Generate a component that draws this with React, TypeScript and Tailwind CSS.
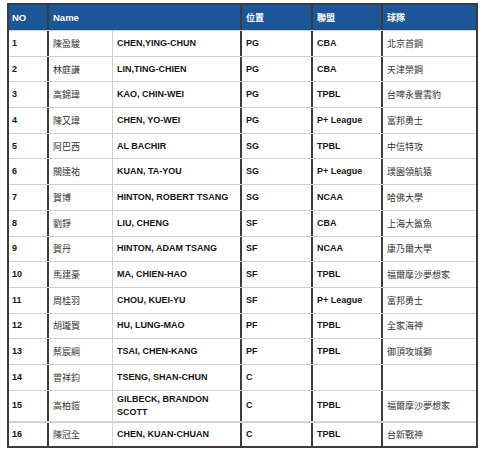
const players = [
  { no: 1, zh: '陳盈駿', en: 'CHEN,YING-CHUN', pos: 'PG', league: 'CBA', team: '北京首鋼' },
  { no: 2, zh: '林庭謙', en: 'LIN,TING-CHIEN', pos: 'PG', league: 'CBA', team: '天津榮鋼' },
  { no: 3, zh: '高錦瑋', en: 'KAO, CHIN-WEI', pos: 'PG', league: 'TPBL', team: '台啤永豐雲豹' },
  { no: 4, zh: '陳又瑋', en: 'CHEN, YO-WEI', pos: 'PG', league: 'P+ League', team: '富邦勇士' },
  { no: 5, zh: '阿巴西', en: 'AL BACHIR', pos: 'SG', league: 'TPBL', team: '中信特攻' },
  { no: 6, zh: '關達祐', en: 'KUAN, TA-YOU', pos: 'SG', league: 'P+ League', team: '璞園領航猿' },
  { no: 7, zh: '賀博', en: 'HINTON, ROBERT TSANG', pos: 'SG', league: 'NCAA', team: '哈佛大學' },
  { no: 8, zh: '劉錚', en: 'LIU, CHENG', pos: 'SF', league: 'CBA', team: '上海大鯊魚' },
  { no: 9, zh: '賀丹', en: 'HINTON, ADAM TSANG', pos: 'SF', league: 'NCAA', team: '康乃爾大學' },
  { no: 10, zh: '馬建豪', en: 'MA, CHIEN-HAO', pos: 'SF', league: 'TPBL', team: '福爾摩沙夢想家' },
  { no: 11, zh: '周桂羽', en: 'CHOU, KUEI-YU', pos: 'SF', league: 'P+ League', team: '富邦勇士' },
  { no: 12, zh: '胡瓏貿', en: 'HU, LUNG-MAO', pos: 'PF', league: 'TPBL', team: '全家海神' },
  { no: 13, zh: '蔡宸綱', en: 'TSAI, CHEN-KANG', pos: 'PF', league: 'TPBL', team: '御頂攻城獅' },
  { no: 14, zh: '曾祥鈞', en: 'TSENG, SHAN-CHUN', pos: 'C', league: '', team: '' },
  { no: 15, zh: '高柏鎧', en: 'GILBECK, BRANDON SCOTT', pos: 'C', league: 'TPBL', team: '福爾摩沙夢想家' },
  { no: 16, zh: '陳冠全', en: 'CHEN, KUAN-CHUAN', pos: 'C', league: 'TPBL', team: '台新戰神' },
]

const cols = 'grid grid-cols-[40px_64px_129px_71px_70px_93px]'
const dark = 'border-r-2 border-[#3c3c3c]'
const zh = "font-['Noto_Sans_CJK_TC','Noto_Sans_CJK_SC',sans-serif]"

export default function App() {
  return (
    <div className="w-[485px] h-[450px] bg-white pt-[3px] pl-[7px] font-['Liberation_Sans',Arial,sans-serif] text-[9px] leading-[13px] text-[#151515]">
      <div className="w-[471px] border-2 border-[#3c3c3c]">
        <div className={`${cols} h-[25px] bg-[#1b5697] text-white font-bold`}>
          <div className={`${dark} flex items-center pl-[3px] text-[9.5px]`}>NO</div>
          <div className={`${dark} col-span-2 flex items-center pl-[4px] text-[9.5px]`}>Name</div>
          <div className={`${dark} ${zh} flex items-center pl-[4px]`}>位置</div>
          <div className={`${dark} ${zh} flex items-center pl-[4px]`}>聯盟</div>
          <div className={`${zh} flex items-center pl-[4px]`}>球隊</div>
        </div>
        {players.map((p) => (
          <div
            key={p.no}
            className={`${cols} border-t border-[#d2d2d2] ${p.no === 15 ? 'h-[31px]' : p.no === 16 ? 'h-[25px] border-t-2' : 'h-[25.7px]'}`}
          >
            <div className={`${dark} flex items-center pl-[3px] font-bold`}>{p.no}</div>
            <div className={`border-r border-[#d2d2d2] ${zh} flex items-center pl-[4px] text-[#333]`}>{p.zh}</div>
            <div className={`${dark} flex items-center pl-[4px] font-bold whitespace-nowrap`}>
              {p.no === 15 ? (
                <span>
                  GILBECK, BRANDON
                  <br />
                  SCOTT
                </span>
              ) : (
                p.en
              )}
            </div>
            <div className={`${dark} flex items-center pl-[4px] font-bold`}>{p.pos}</div>
            <div className={`${dark} flex items-center pl-[4px] font-bold`}>{p.league}</div>
            <div className={`${zh} flex items-center pl-[4px] text-[#333]`}>{p.team}</div>
          </div>
        ))}
      </div>
    </div>
  )
}
